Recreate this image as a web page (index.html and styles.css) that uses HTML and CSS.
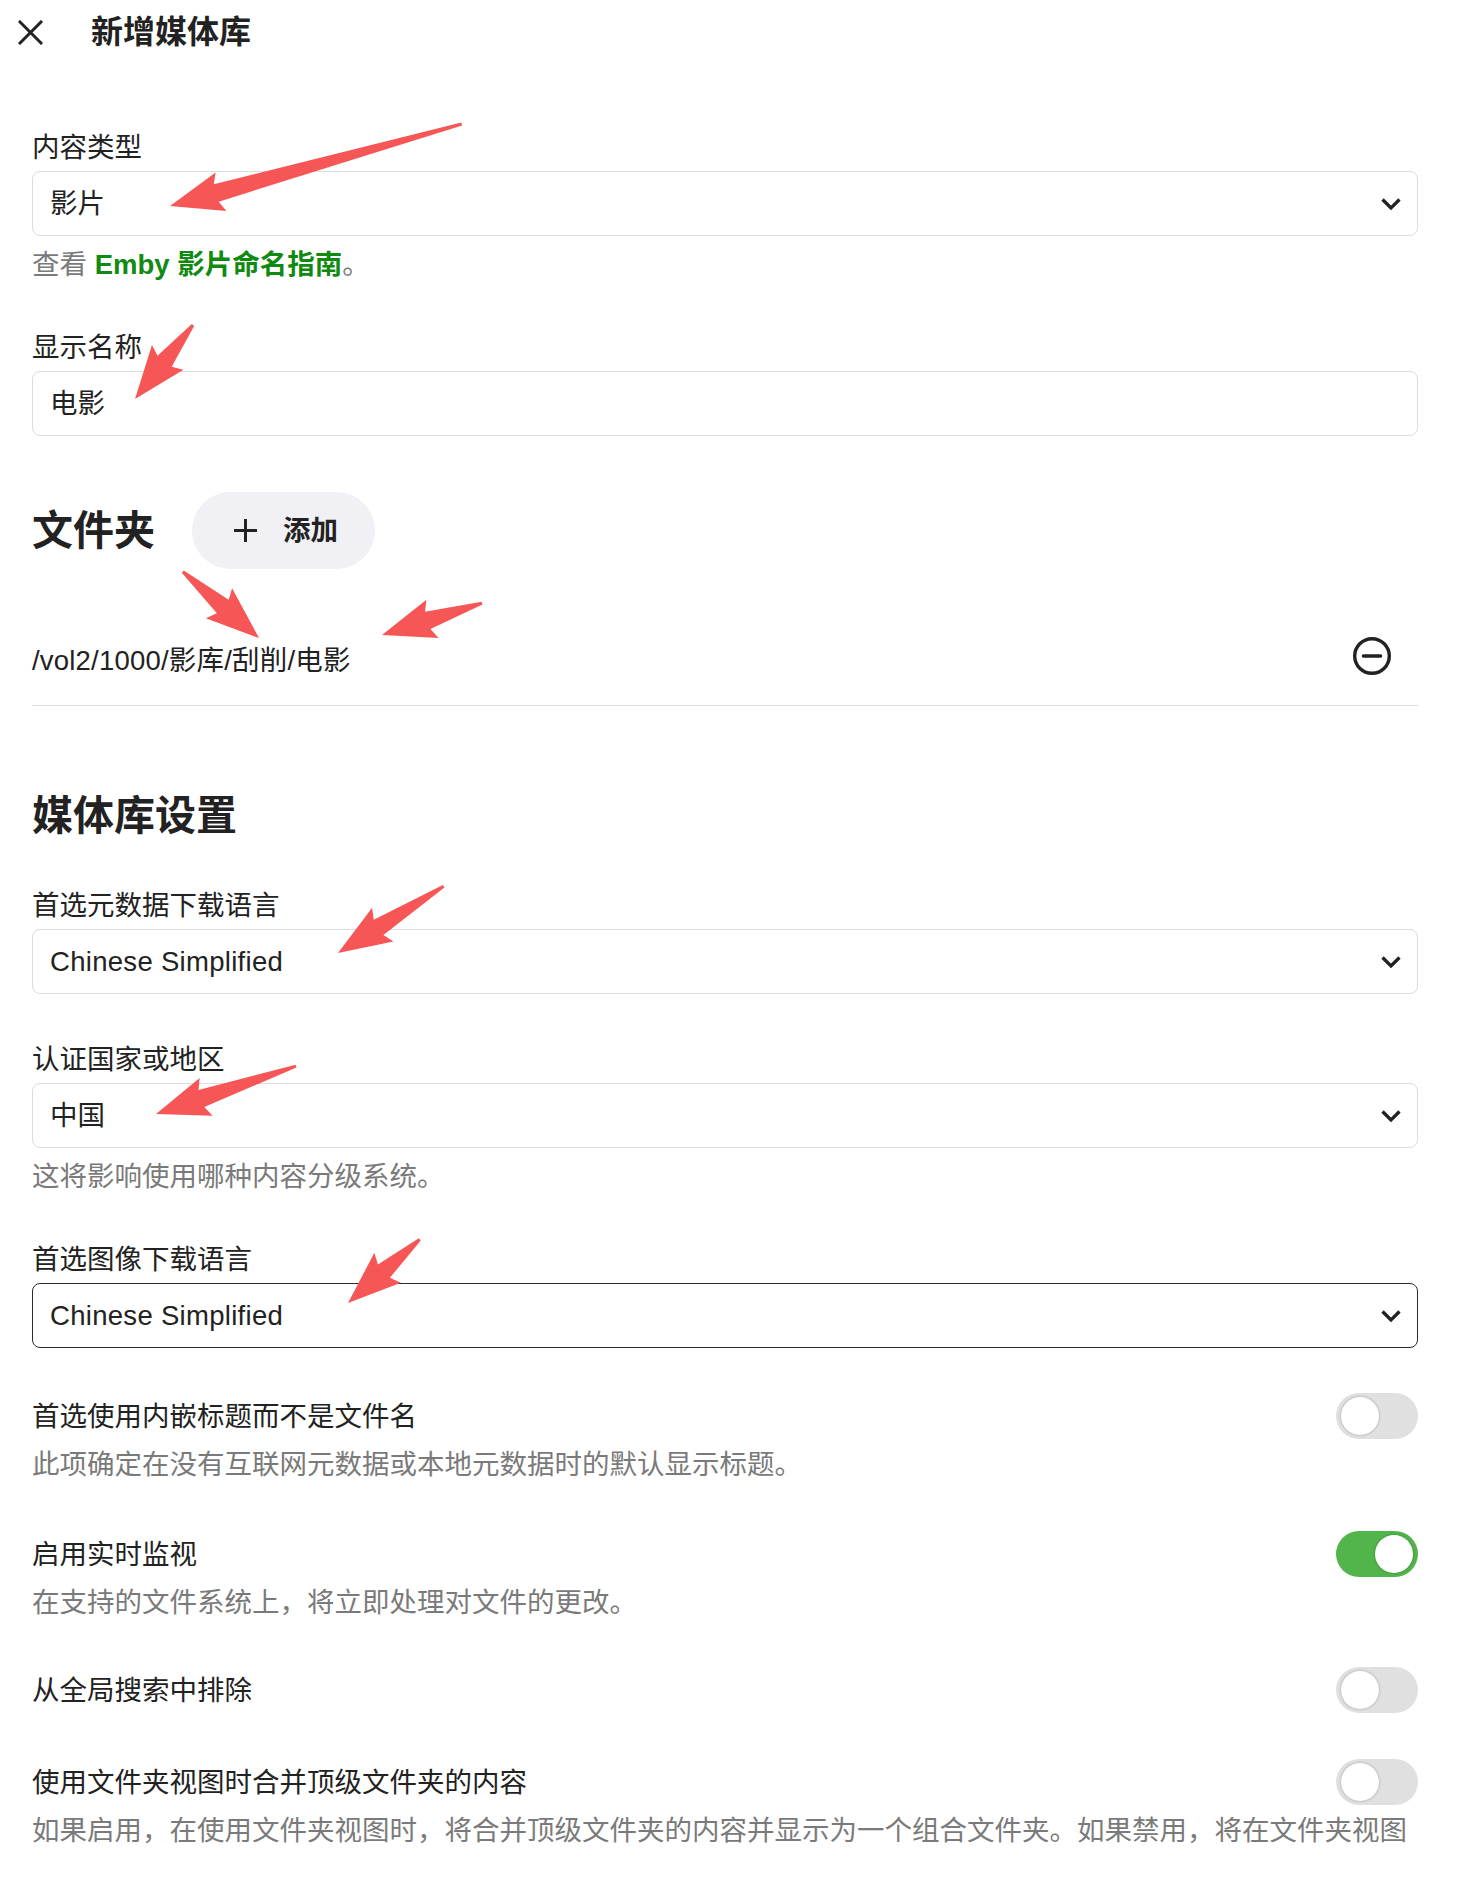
FILE: index.html
```html
<!DOCTYPE html>
<html lang="zh-CN">
<head>
<meta charset="utf-8">
<title>新增媒体库</title>
<link rel="stylesheet" href="styles.css">
</head>
<body>
<div class="dialog">
  <header class="topbar">
    <button class="close-btn" aria-label="关闭">
      <svg width="25" height="25" viewBox="0 0 25 25"><path d="M2 2 L23 23 M23 2 L2 23" stroke="#222" stroke-width="3" stroke-linecap="square" fill="none"/></svg>
    </button>
    <h1 class="title">新增媒体库</h1>
  </header>

  <main class="form">
    <div class="field first">
      <label class="field-label">内容类型</label>
      <div class="select"><span>影片</span>
        <svg class="chev" width="22" height="14" viewBox="0 0 22 14"><polyline points="2.5,2.5 11,11 19.5,2.5" fill="none" stroke="#222" stroke-width="3.3"/></svg>
      </div>
      <div class="help">查看 <a class="link">Emby 影片命名指南</a>。</div>
    </div>

    <div class="field">
      <label class="field-label">显示名称</label>
      <div class="input">电影</div>
    </div>

    <div class="section-head">
      <h2 class="section-title">文件夹</h2>
      <button class="add-btn">
        <svg width="25" height="25" viewBox="0 0 25 25"><path d="M12.5 1 V24 M1 12.5 H24" stroke="#222" stroke-width="3" fill="none"/></svg>
        <span>添加</span>
      </button>
    </div>

    <div class="folder-row">
      <span class="path">/vol2/1000/影库/刮削/电影</span>
      <svg class="minus" width="40" height="40" viewBox="0 0 40 40"><circle cx="20" cy="20" r="17.3" fill="none" stroke="#222" stroke-width="3.4"/><path d="M11.5 20 H28.5" stroke="#222" stroke-width="3.6" stroke-linecap="round"/></svg>
    </div>

    <h2 class="section-title settings-title">媒体库设置</h2>

    <div class="field after-title">
      <label class="field-label">首选元数据下载语言</label>
      <div class="select"><span class="latin">Chinese Simplified</span>
        <svg class="chev" width="22" height="14" viewBox="0 0 22 14"><polyline points="2.5,2.5 11,11 19.5,2.5" fill="none" stroke="#222" stroke-width="3.3"/></svg>
      </div>
    </div>

    <div class="field">
      <label class="field-label">认证国家或地区</label>
      <div class="select"><span>中国</span>
        <svg class="chev" width="22" height="14" viewBox="0 0 22 14"><polyline points="2.5,2.5 11,11 19.5,2.5" fill="none" stroke="#222" stroke-width="3.3"/></svg>
      </div>
      <div class="help">这将影响使用哪种内容分级系统。</div>
    </div>

    <div class="field">
      <label class="field-label">首选图像下载语言</label>
      <div class="select focused"><span class="latin">Chinese Simplified</span>
        <svg class="chev" width="22" height="14" viewBox="0 0 22 14"><polyline points="2.5,2.5 11,11 19.5,2.5" fill="none" stroke="#222" stroke-width="3.3"/></svg>
      </div>
    </div>

    <div class="toggle-row r1">
      <div class="toggle-head">
        <span>首选使用内嵌标题而不是文件名</span>
        <span class="toggle"><span class="knob"></span></span>
      </div>
      <div class="help tight">此项确定在没有互联网元数据或本地元数据时的默认显示标题。</div>
    </div>

    <div class="toggle-row r2">
      <div class="toggle-head">
        <span>启用实时监视</span>
        <span class="toggle on"><span class="knob"></span></span>
      </div>
      <div class="help tight">在支持的文件系统上，将立即处理对文件的更改。</div>
    </div>

    <div class="toggle-row r3">
      <div class="toggle-head">
        <span>从全局搜索中排除</span>
        <span class="toggle"><span class="knob"></span></span>
      </div>
    </div>

    <div class="toggle-row r4">
      <div class="toggle-head">
        <span>使用文件夹视图时合并顶级文件夹的内容</span>
        <span class="toggle"><span class="knob"></span></span>
      </div>
      <div class="help tight">如果启用，在使用文件夹视图时，将合并顶级文件夹的内容并显示为一个组合文件夹。如果禁用，将在文件夹视图中单独显示每个顶级文件夹。</div>
    </div>
  </main>
</div>

<svg class="annot" width="1470" height="1880" viewBox="0 0 1470 1880" aria-hidden="true">
  <g fill="#f75656">
    <polygon transform="translate(170 206) rotate(-15.7)" points="0,0 53,-20 48,-9 303,-1.5 303,1.5 48,9 53,20"/>
    <polygon transform="translate(135 399) rotate(-51.9)" points="0,0 53,-20 48,-9 94,-1.5 94,1.5 48,9 53,20"/>
    <polygon transform="translate(259 638) rotate(-139)" points="0,0 53,-20 48,-9 101,-1.5 101,1.5 48,9 53,20"/>
    <polygon transform="translate(382 635) rotate(-17.7)" points="0,0 53,-20 48,-9 105,-1.5 105,1.5 48,9 53,20"/>
    <polygon transform="translate(338 953) rotate(-32.3)" points="0,0 53,-20 48,-9 125,-1.5 125,1.5 48,9 53,20"/>
    <polygon transform="translate(156 1114) rotate(-18.9)" points="0,0 53,-20 48,-9 148,-1.5 148,1.5 48,9 53,20"/>
    <polygon transform="translate(348 1303) rotate(-41.6)" points="0,0 53,-20 48,-9 96,-1.5 96,1.5 48,9 53,20"/>
  </g>
</svg>
</body>
</html>
```

FILE: styles.css
```css
html, body {
  margin: 0;
  padding: 0;
  background: #ffffff;
}

body {
  position: relative;
  color: #222222;
  font-family: "Liberation Sans", "Noto Sans CJK SC", sans-serif;
  font-size: 27.5px;
  line-height: 35px;
}

.dialog {
  width: 1470px;
  height: 1850px;
  overflow: hidden;
}

.topbar {
  height: 64px;
  display: flex;
  align-items: center;
  padding-left: 18px;
}

.close-btn {
  width: 25px;
  height: 25px;
  padding: 0;
  border: 0;
  background: none;
  display: flex;
}

.title {
  margin: 0 0 0 48px;
  font-size: 32px;
  line-height: 40px;
  font-weight: 700;
}

.form {
  padding: 0 52px 0 32px;
}

.field {
  margin-top: 48px;
}

.field.first {
  margin-top: 66px;
}

.field.after-title {
  margin-top: 46px;
}

.field-label {
  display: block;
  margin-bottom: 6px;
}

.select,
.input {
  height: 65px;
  box-sizing: border-box;
  border: 1px solid #dcdcdc;
  border-radius: 8px;
  display: flex;
  align-items: center;
  justify-content: space-between;
  padding: 0 15px 0 17px;
}

.latin {
  letter-spacing: 0.3px;
}

.select.focused {
  border-color: #2a2a2a;
}

.help {
  margin-top: 11px;
  color: #7a7a7a;
}

.help.tight {
  margin-top: 8px;
}

.link {
  color: #108a10;
  font-weight: 700;
  text-decoration: none;
}

.section-head {
  margin-top: 56px;
  display: flex;
  align-items: center;
  gap: 37px;
}

.section-title {
  margin: 0;
  font-size: 41px;
  line-height: 52px;
  font-weight: 700;
}

.settings-title {
  margin-top: 84px;
}

.add-btn {
  height: 77px;
  width: 183px;
  border: 0;
  border-radius: 39px;
  background: #f0f0f5;
  display: flex;
  align-items: center;
  gap: 25px;
  padding: 0 0 0 41px;
  font: inherit;
  font-weight: 700;
  color: #222222;
}

.folder-row {
  margin-top: 46px;
  height: 91px;
  box-sizing: border-box;
  border-bottom: 1px solid #dddddd;
  display: flex;
  align-items: center;
  justify-content: space-between;
}

.path {
  letter-spacing: 0.2px;
}

.minus {
  margin-right: 26px;
  margin-bottom: 8px;
}

.toggle-row.r1 { margin-top: 45px; }
.toggle-row.r2 { margin-top: 49px; }
.toggle-row.r3 { margin-top: 47px; }
.toggle-row.r4 { margin-top: 46px; }

.toggle-head {
  height: 46px;
  display: flex;
  align-items: center;
  justify-content: space-between;
}

.toggle {
  width: 82px;
  height: 46px;
  border-radius: 23px;
  background: #e0e0e0;
  display: flex;
  align-items: center;
  padding: 0 5px;
  box-sizing: border-box;
  flex: none;
}

.toggle.on {
  background: #52b54b;
  justify-content: flex-end;
}

.knob {
  width: 38px;
  height: 38px;
  border-radius: 50%;
  background: #ffffff;
  box-shadow: 0 0 3px rgba(0, 0, 0, 0.28);
}

.annot {
  position: absolute;
  top: 0;
  left: 0;
  pointer-events: none;
}
```
